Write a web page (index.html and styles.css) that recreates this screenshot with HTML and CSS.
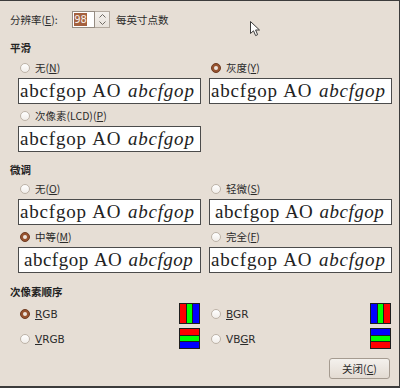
FILE: index.html
```html
<!DOCTYPE html>
<html lang="zh-CN">
<head>
<meta charset="utf-8">
<title>字体渲染细节</title>
<link rel="stylesheet" href="styles.css">
</head>
<body>
<div class="window">
  <div class="res-row">
    <label class="res-label">分辨率(<u>E</u>):</label>
    <div class="spin">
      <div class="spin-entry"><span class="sel">98</span></div>
      <div class="spin-btns">
        <svg width="7" height="4" viewBox="0 0 7 4"><path d="M0.5 3.5 L3.5 0.5 L6.5 3.5" fill="none" stroke="#6f6a64" stroke-width="1"/></svg>
        <svg width="7" height="4" viewBox="0 0 7 4"><path d="M0.5 0.5 L3.5 3.5 L6.5 0.5" fill="none" stroke="#6f6a64" stroke-width="1"/></svg>
      </div>
    </div>
    <span class="res-unit">每英寸点数</span>
  </div>

  <h3 class="section-title first">平滑</h3>
  <div class="opt-grid">
    <div class="opt">
      <div class="radio-row"><span class="radio"></span><span>无(<u>N</u>)</span></div>
      <div class="sample">abcfgop AO <i>abcfgop</i></div>
    </div>
    <div class="opt">
      <div class="radio-row"><span class="radio on"></span><span>灰度(<u>Y</u>)</span></div>
      <div class="sample">abcfgop AO <i>abcfgop</i></div>
    </div>
    <div class="opt">
      <div class="radio-row"><span class="radio"></span><span>次像素(LCD)(<u>P</u>)</span></div>
      <div class="sample">abcfgop AO <i>abcfgop</i></div>
    </div>
  </div>

  <h3 class="section-title">微调</h3>
  <div class="opt-grid">
    <div class="opt">
      <div class="radio-row"><span class="radio"></span><span>无(<u>O</u>)</span></div>
      <div class="sample">abcfgop AO <i>abcfgop</i></div>
    </div>
    <div class="opt">
      <div class="radio-row"><span class="radio"></span><span>轻微(<u>S</u>)</span></div>
      <div class="sample wide">abcfgop AO <i>abcfgop</i></div>
    </div>
    <div class="opt">
      <div class="radio-row"><span class="radio on"></span><span>中等(<u>M</u>)</span></div>
      <div class="sample wide">abcfgop AO <i>abcfgop</i></div>
    </div>
    <div class="opt">
      <div class="radio-row"><span class="radio"></span><span>完全(<u>F</u>)</span></div>
      <div class="sample">abcfgop AO <i>abcfgop</i></div>
    </div>
  </div>

  <h3 class="section-title last">次像素顺序</h3>
  <div class="sub-grid">
    <div class="sub-opt">
      <div class="radio-row"><span class="radio on"></span><span class="lat"><u>R</u>GB</span></div>
      <svg class="sp-icon" width="21" height="21" viewBox="0 0 21 21"><rect x="0" y="0" width="21" height="21" fill="#1e1e1e"/><rect x="1" y="1" width="6" height="19" fill="#ff0000"/><rect x="8" y="1" width="5" height="19" fill="#00ff00"/><rect x="14" y="1" width="6" height="19" fill="#0000ff"/></svg>
    </div>
    <div class="sub-opt">
      <div class="radio-row"><span class="radio"></span><span class="lat"><u>B</u>GR</span></div>
      <svg class="sp-icon" width="21" height="21" viewBox="0 0 21 21"><rect x="0" y="0" width="21" height="21" fill="#1e1e1e"/><rect x="1" y="1" width="6" height="19" fill="#0000ff"/><rect x="8" y="1" width="5" height="19" fill="#00ff00"/><rect x="14" y="1" width="6" height="19" fill="#ff0000"/></svg>
    </div>
    <div class="sub-opt">
      <div class="radio-row"><span class="radio"></span><span class="lat"><u>V</u>RGB</span></div>
      <svg class="sp-icon" width="21" height="21" viewBox="0 0 21 21"><rect x="0" y="0" width="21" height="21" fill="#1e1e1e"/><rect x="1" y="1" width="19" height="6" fill="#ff0000"/><rect x="1" y="8" width="19" height="5" fill="#00ff00"/><rect x="1" y="14" width="19" height="6" fill="#0000ff"/></svg>
    </div>
    <div class="sub-opt">
      <div class="radio-row"><span class="radio"></span><span class="lat">VB<u>G</u>R</span></div>
      <svg class="sp-icon" width="21" height="21" viewBox="0 0 21 21"><rect x="0" y="0" width="21" height="21" fill="#1e1e1e"/><rect x="1" y="1" width="19" height="6" fill="#0000ff"/><rect x="1" y="8" width="19" height="5" fill="#00ff00"/><rect x="1" y="14" width="19" height="6" fill="#ff0000"/></svg>
    </div>
  </div>

  <div class="btn-row">
    <button class="btn">关闭(<u>C</u>)</button>
  </div>

  <svg class="cursor" width="11" height="16" viewBox="0 0 11 16"><path d="M0.5 0.5 L0.5 12.5 L3.5 9.8 L5.6 14.6 L7.6 13.7 L5.6 9 L9.5 9 Z" fill="#ffffff" stroke="#3a3a3a" stroke-width="1" stroke-linejoin="round"/></svg>
</div>
</body>
</html>
```

FILE: styles.css
```css
* {
  box-sizing: border-box;
}

body {
  margin: 0;
  background: #e6ded5;
}

.window {
  position: relative;
  width: 400px;
  height: 388px;
  background: #e6ded5;
  border-top: 1px solid #3c3c3c;
  border-right: 1px solid #3c3c3c;
  border-bottom: 2px solid #3c3c3c;
  padding: 10px 0 0 10px;
  font-family: "Noto Sans CJK SC", "Noto Sans", sans-serif;
  font-size: 10.5px;
  color: #2b2b2b;
}

u {
  text-decoration: underline;
  text-underline-offset: 1px;
}

/* resolution row */
.res-row {
  display: flex;
  align-items: center;
  height: 17px;
}

.res-label {
  width: 62px;
}

.spin {
  display: flex;
  height: 17px;
}

.spin-entry {
  width: 23px;
  height: 17px;
  border: 1px solid #958c82;
  background: #ffffff;
  padding: 1px;
  display: flex;
}

.sel {
  display: block;
  width: 13px;
  height: 13px;
  background: #a4603e;
  color: #f6eee8;
  font-family: "DejaVu Sans", sans-serif;
  font-size: 10px;
  line-height: 13px;
  text-align: center;
}

.spin-btns {
  width: 15px;
  height: 17px;
  border: 1px solid #b2a99e;
  border-left: none;
  background: linear-gradient(#f4f1ed, #e8e2db);
  display: flex;
  flex-direction: column;
  align-items: center;
  justify-content: space-evenly;
}

.res-unit {
  margin-left: 6px;
}

/* section headings */
.section-title {
  margin: 10px 0 3px;
  height: 16px;
  line-height: 16px;
  font-size: 10.5px;
  font-weight: bold;
  color: #222;
}

.section-title.first {
  margin-top: 12px;
  margin-bottom: 4px;
}

.section-title.last {
  margin-top: 11px;
}

/* option grids */
.opt-grid {
  display: grid;
  grid-template-columns: 183px 183px;
  column-gap: 8px;
  row-gap: 4px;
  margin-left: 8px;
}

.radio-row {
  display: flex;
  align-items: center;
  height: 16px;
  gap: 5px;
  padding-left: 2px;
  line-height: 16px;
}

.opt .radio-row {
  margin-bottom: 2px;
}

.radio {
  position: relative;
  flex: none;
  width: 10px;
  height: 10px;
  border-radius: 50%;
  border: 1px solid #bdb3a8;
  background: linear-gradient(#ffffff, #f1ede9);
}

.radio.on {
  border-color: #6f3b22;
  background: #97532f;
}

.radio.on::after {
  content: "";
  position: absolute;
  left: 2px;
  top: 2px;
  width: 4px;
  height: 4px;
  border-radius: 50%;
  background: #ece4dd;
}

.sample {
  height: 26px;
  border: 1px solid #4b4b4b;
  background: #ffffff;
  overflow: hidden;
  white-space: nowrap;
  font-family: "Liberation Serif", serif;
  font-size: 19px;
  letter-spacing: 0.8px;
  word-spacing: 1px;
  line-height: 24px;
  padding-left: 1px;
  color: #222;
}

.sample.wide {
  padding-left: 5px;
  letter-spacing: 0.5px;
}

/* subpixel order */
.sub-grid {
  display: grid;
  grid-template-columns: 183px 183px;
  column-gap: 8px;
  row-gap: 4px;
  margin-left: 8px;
}

.sub-opt {
  display: flex;
  align-items: center;
  justify-content: space-between;
  height: 21px;
  padding-right: 1px;
}

.lat {
  font-family: "DejaVu Sans", sans-serif;
  font-size: 10.5px;
}

.sp-icon {
  display: block;
}

/* button */
.btn-row {
  display: flex;
  justify-content: flex-end;
  margin-top: 9px;
  padding-right: 9px;
}

.btn {
  width: 61px;
  height: 21px;
  border: 1px solid #a59b90;
  border-radius: 3px;
  background: linear-gradient(#f4f1ed, #e3dbd2);
  font-family: "Noto Sans CJK SC", sans-serif;
  font-size: 10.5px;
  color: #2b2b2b;
  padding: 0;
  line-height: 19px;
}

/* mouse pointer overlay */
.cursor {
  position: absolute;
  left: 250px;
  top: 20px;
}
```
